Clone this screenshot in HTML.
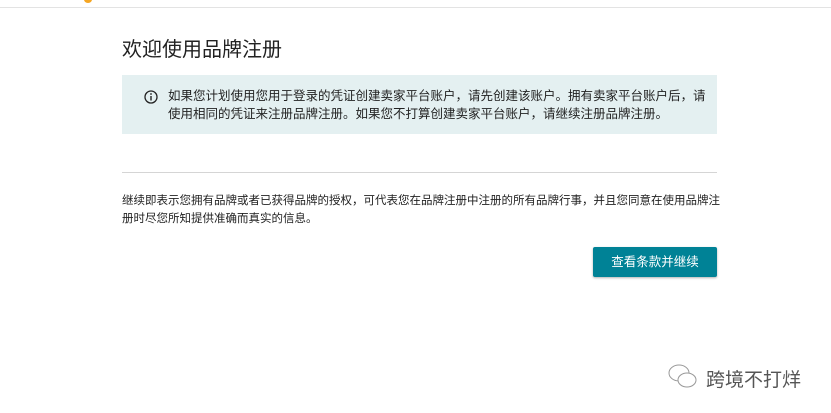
<!DOCTYPE html>
<html><head><meta charset="utf-8"><style>
body{margin:0;width:831px;height:413px;background:#fff;position:relative;overflow:hidden;font-family:"Liberation Sans","Noto Sans CJK SC",sans-serif;color:#111}
.top{position:absolute;left:0;top:0;width:831px;height:7px;border-bottom:1px solid #e3e3e3}
.dot{position:absolute;left:84px;top:-4px;width:8px;height:7px;border-radius:50%;background:#f5a623}
h1{position:absolute;left:122px;top:33px;margin:0;font-size:20px;font-weight:400;color:#222}
.info{position:absolute;left:122px;top:75px;width:595px;height:59px;background:#e4f0f1}
.info svg{position:absolute;left:22px;top:15px}
.info p{position:absolute;left:46px;top:12px;margin:0;font-size:12.5px;line-height:18px;color:#222;width:540px}
.hr{position:absolute;left:122px;top:172px;width:595px;height:1px;background:#d5d5d5}
.t{position:absolute;left:122px;top:192px;width:600px;font-size:11.5px;line-height:18px;color:#222;margin:0}
.btn{position:absolute;left:593px;top:247px;width:124px;height:30px;background:#008296;color:#fff;font-size:12.5px;line-height:30px;text-align:center;border-radius:2px;box-shadow:0 1px 2px rgba(0,0,0,.3)}
.wm{position:absolute;left:706px;top:365px;font-size:19px;color:#555}
</style></head><body>
<div class="top"></div><div class="dot"></div>
<h1>欢迎使用品牌注册</h1>
<div class="info"><svg width="14" height="14" viewBox="0 0 14 14"><circle cx="7" cy="7" r="6" fill="none" stroke="#222" stroke-width="1.3"/><rect x="6.3" y="6" width="1.4" height="4.5" fill="#222"/><circle cx="7" cy="4" r=".9" fill="#222"/></svg>
<p>如果您计划使用您用于登录的凭证创建卖家平台账户，请先创建该账户。拥有卖家平台账户后，请使用相同的凭证来注册品牌注册。如果您不打算创建卖家平台账户，请继续注册品牌注册。</p></div>
<div class="hr"></div>
<p class="t">继续即表示您拥有品牌或者已获得品牌的授权，可代表您在品牌注册中注册的所有品牌行事，并且您同意在使用品牌注册时尽您所知提供准确而真实的信息。</p>
<div class="btn">查看条款并继续</div>
<svg style="position:absolute;left:667px;top:362px" width="32" height="28" viewBox="0 0 32 28"><ellipse cx="12" cy="11" rx="10" ry="8" fill="none" stroke="#999"/><ellipse cx="20" cy="18" rx="9" ry="7" fill="#fff" stroke="#999"/></svg>
<div class="wm">跨境不打烊</div>
</body></html>
